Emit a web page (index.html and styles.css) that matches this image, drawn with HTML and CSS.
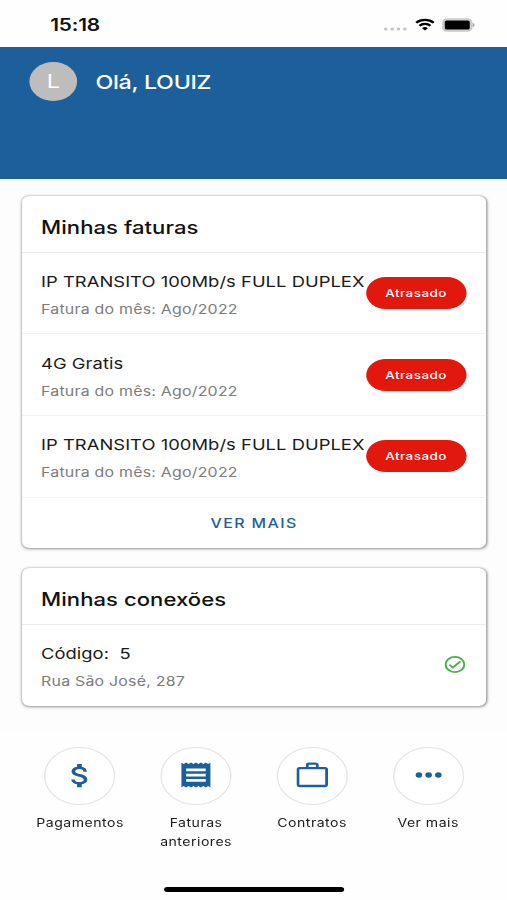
FILE: index.html
```html
<!DOCTYPE html>
<html lang="pt-BR">
<head>
<meta charset="utf-8">
<title>Minhas faturas</title>
<link rel="stylesheet" href="styles.css">
</head>
<body>
<div class="screen">
  <div class="status">
    <span class="clock">15:18</span>
    <span class="indicators">
      <svg class="signal" width="20" height="6" viewBox="0 0 20 6" fill="#c4c4c4"><circle cx="2" cy="3" r="1.5"/><circle cx="7.2" cy="3" r="1.5"/><circle cx="12.4" cy="3" r="1.5"/><circle cx="17.6" cy="3" r="1.5"/></svg>
      <svg class="wifi" width="16" height="13" viewBox="0 0 16 13" fill="none" stroke="#000" stroke-width="2.2"><path d="M.8 4.700a10.400 10.400 0 0 1 14.400 0M3.500 7.700a6.500 6.500 0 0 1 9 0"/><path d="M8 12.400 5.600 10.200a3.400 3.400 0 0 1 4.800 0z" fill="#000" stroke="none"/></svg>
      <svg class="battery" width="27" height="14" viewBox="0 0 27 14"><rect x=".7" y=".9" width="23.400" height="12.200" rx="3.400" fill="#d4d4d4" stroke="#c8c8c8" stroke-width="1.400"/><rect x="2.200" y="2.500" width="20.400" height="9" rx="1.500"/><path d="M25 4.800c2 .8 2 3.600 0 4.400z" fill="#a8a8a8"/></svg>
    </span>
  </div>
  <header class="hero">
    <div class="avatar">L</div>
    <div class="hello">Olá, LOUIZ</div>
  </header>
  <main class="content">
    <section class="card">
      <h2 class="card-title">Minhas faturas</h2>
      <div class="row">
        <div><div class="name">IP TRANSITO 100Mb/s FULL DUPLEX</div><div class="detail">Fatura do mês: Ago/2022</div></div>
        <span class="pill">Atrasado</span>
      </div>
      <div class="row">
        <div><div class="name">4G Gratis</div><div class="detail">Fatura do mês: Ago/2022</div></div>
        <span class="pill">Atrasado</span>
      </div>
      <div class="row">
        <div><div class="name">IP TRANSITO 100Mb/s FULL DUPLEX</div><div class="detail">Fatura do mês: Ago/2022</div></div>
        <span class="pill">Atrasado</span>
      </div>
      <div class="more">VER MAIS</div>
    </section>
    <section class="card connections">
      <h2 class="card-title">Minhas conexões</h2>
      <div class="row">
        <div><div class="name">Código:&nbsp; 5</div><div class="detail">Rua São José, 287</div></div>
        <svg class="check" width="17" height="17" viewBox="2 2 20 20" fill="#4caf50"><path d="M12 2a10 10 0 1 0 0 20 10 10 0 0 0 0-20zm0 18a8 8 0 1 1 0-16 8 8 0 0 1 0 16zm4.600-12.400L10 14.200l-2.600-2.600L6 13l4 4 8-8z"/></svg>
      </div>
    </section>
  </main>
  <nav class="nav">
    <div class="item">
      <span class="ring"><svg width="31" height="31" viewBox="0 0 24 24" fill="#1c5f9d"><path d="M11.800 10.900c-2.270-.59-3-1.200-3-2.150 0-1.090 1.010-1.850 2.700-1.850 1.780 0 2.440.85 2.500 2.100h2.210c-.07-1.720-1.120-3.300-3.210-3.810V3h-3v2.160c-1.940.42-3.500 1.680-3.500 3.610 0 2.310 1.910 3.460 4.700 4.130 2.500.6 3 1.480 3 2.410 0 .69-.49 1.790-2.700 1.790-2.060 0-2.870-.92-2.980-2.100h-2.200c.12 2.190 1.760 3.420 3.680 3.830V21h3v-2.150c1.950-.37 3.500-1.500 3.500-3.550 0-2.840-2.430-3.810-4.700-4.400z"/></svg></span>
      <span class="label">Pagamentos</span>
    </div>
    <div class="item">
      <span class="ring"><svg width="24" height="26" viewBox="0 0 24 26" fill="#1c5f9d" fill-rule="evenodd"><path d="M0 .5 2 2 4 .5 6 2 8 .5 10 2 12 .5 14 2 16 .5 18 2 20 .5 22 2 24 .5V25.500L22 24 20 25.500 18 24 16 25.500 14 24 12 25.500 10 24 8 25.500 6 24 4 25.500 2 24 0 25.500zM4 6.500v2.800h16v-2.800zm0 5.200v2.800h16v-2.800zm0 5.200v2.800h16v-2.800z"/></svg></span>
      <span class="label">Faturas anteriores</span>
    </div>
    <div class="item">
      <span class="ring"><svg width="26" height="26" viewBox="0 0 26 26" fill="none" stroke="#1c5f9d" stroke-width="2.300" stroke-linejoin="round"><rect x="1.300" y="6.200" width="23.400" height="17.800" rx="1.400"/><path d="M8.900 6.200V3a1.300 1.300 0 0 1 1.300-1.300h5.600A1.300 1.300 0 0 1 17.100 3v3.200"/></svg></span>
      <span class="label">Contratos</span>
    </div>
    <div class="item">
      <span class="ring"><svg width="28" height="28" viewBox="0 0 24 24" fill="#1c5f9d"><circle cx="5.200" cy="12" r="2.300"/><circle cx="12" cy="12" r="2.300"/><circle cx="18.800" cy="12" r="2.300"/></svg></span>
      <span class="label">Ver mais</span>
    </div>
  </nav>
  <div class="home"></div>
</div>
</body>
</html>
```
FILE: styles.css
```css
* { box-sizing: border-box; }
html, body { margin: 0; height: 900px; overflow: hidden; background: #fefefe; }
/* 414pt phone layout widened to fill the 507px window */
.screen {
  width: 414px; height: 900px;
  display: flex; flex-direction: column;
  transform: scaleX(1.22464); transform-origin: 0 0;
  font-family: Inter, "Liberation Sans", sans-serif;
  color: #111;
}
.status { height: 46.500px; flex: none; display: flex; justify-content: space-between; align-items: center; padding: 3px 26px 0 41px; background: #fefefe; }
.clock { font-size: 17px; font-weight: 600; line-height: 20px; letter-spacing: -.15px; }
.indicators { display: flex; align-items: center; }
.signal { margin: 8px 6px 0 0; }
.wifi { margin-right: 6px; }
.hero { height: 132px; flex: none; background: #1c5f9a; display: flex; align-items: flex-start; padding: 15px 24px; }
.avatar { width: 39px; height: 39px; border-radius: 50%; background: #bdbdbd; color: #fff; font-size: 19px; line-height: 40px; text-align: center; }
.hello { margin-left: 15px; color: #fff; font-size: 19px; font-weight: 500; line-height: 41px; letter-spacing: -.25px; }
.content { height: 551.500px; flex: none; padding: 17.500px 17px 0 18px; background: #fdfdfd; }
.card { height: 352px; background: #fff; border-radius: 6px; box-shadow: 0 1px 3px rgba(0,0,0,.34), 0 0 2px rgba(0,0,0,.3); }
.connections { height: 138px; margin-top: 20px; }
.card-title { height: 56.500px; margin: 0; padding: 3px 15.500px 0; border-bottom: 1px solid #ebebeb; font-size: 18px; font-weight: 500; line-height: 57px; letter-spacing: .05px; }
.row { height: 81.700px; display: flex; justify-content: space-between; align-items: center; padding: 0 16px 0 15.500px; border-bottom: 1px solid #f3f3f3; }
.connections .row { border: 0; }
.name { margin-top: 4px; font-size: 15px; line-height: 29px; letter-spacing: .03px; white-space: nowrap; color: #1a1a1a; }
.detail { font-size: 13px; line-height: 27px; letter-spacing: .18px; white-space: nowrap; color: #7c7c7c; }
.pill { width: 82.500px; height: 32px; flex: none; border-radius: 16px; background: #e2180c; color: #fff; font-size: 11px; font-weight: 500; line-height: 33px; text-align: center; letter-spacing: .35px; }
.more { height: 50px; line-height: 51px; text-align: center; color: #1c5f9d; font-size: 13px; font-weight: 500; letter-spacing: 1.150px; }
.check { margin: 0 1px 1px 0; }
.nav { display: flex; height: 157px; flex: none; padding: 17px 17px 0 18px; }
.item { flex: 1; display: flex; flex-direction: column; align-items: center; text-align: center; }
.ring { width: 58px; height: 58px; border: 1px solid #e4e4e4; border-radius: 50%; display: flex; align-items: center; justify-content: center; background: #fff; }
.ring svg { margin-bottom: 2px; }
.label { margin-top: 9px; width: 84px; font-size: 11.500px; line-height: 19px; letter-spacing: .4px; color: #1a1a1a; }
.home { width: 147px; height: 5px; border-radius: 3px; background: #000; margin: 0 auto; }
```
